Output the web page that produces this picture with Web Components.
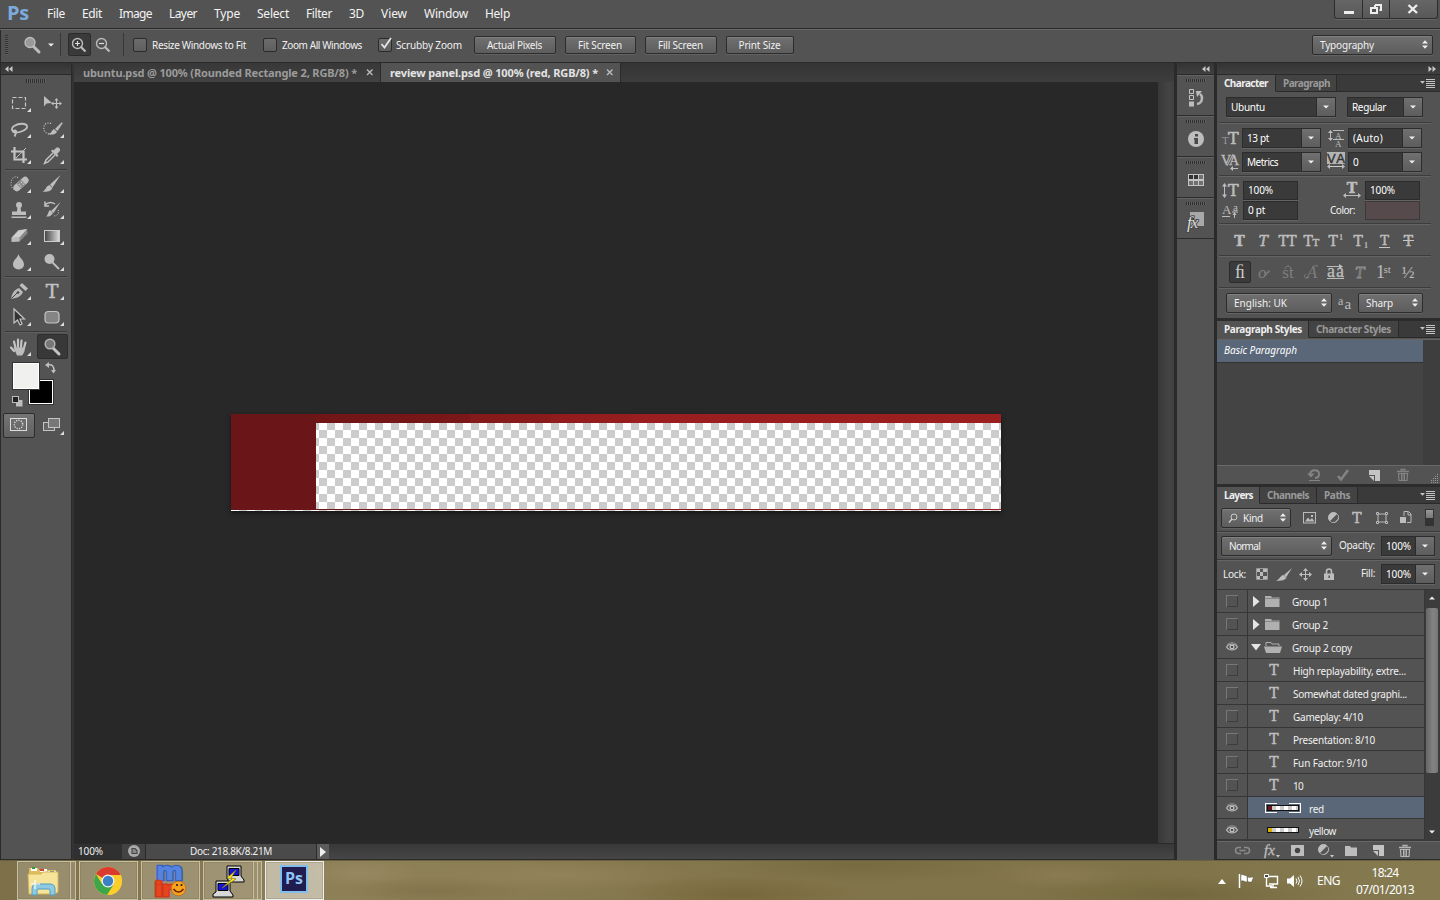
<!DOCTYPE html>
<html lang="en">
<head>
<meta charset="utf-8">
<title>Photoshop workspace</title>
<style>
html,body{margin:0;padding:0;background:#282828;overflow:hidden}
</style>
</head>
<body>
<ps-app></ps-app>
<script>
const BASE = `*{box-sizing:border-box}:host{display:block;box-sizing:border-box}`;
const labels = [];
function define(name, css, html, setup) {
  customElements.define(name, class extends HTMLElement {
    constructor() { super(); this.attachShadow({mode:'open'}); }
    connectedCallback() {
      if (this.ready) return;
      this.ready = true;
      const body = typeof html === 'function' ? html(this) : html;
      this.shadowRoot.innerHTML = `<style>${BASE}${css}</style>${body}`;
      if (setup) setup(this);
    }
  });
}
const S = (x, y, size, t, extra='') => `<text x="${x}" y="${y}" font-family="Liberation Serif,serif" font-size="${size}" ${extra}>${t}</text>`;
const D = (x, y, size, t, extra='') => `<text x="${x}" y="${y}" font-family="DejaVu Serif,serif" font-size="${size}" ${/stroke=/.test(extra)?'':'stroke="#bdbdbd" stroke-width=".5"'} ${extra}>${t}</text>`;
const corner = `<path d="M28 17v4h-4z" fill="#ddd"/>`;
/* name: [width, height, markup]; the default fill is light grey */
const ICONS = {
  lens:[18,18,`<path d="M10 10l6 6" stroke="#bdbdbd" stroke-width="3" stroke-linecap="round"/><circle cx="7" cy="6.5" r="5" fill="#999" stroke="#bdbdbd" stroke-width="1.3"/>`],
  lensIn:[16,16,`<path d="M9.5 9.5l5 5" stroke="#bbb" stroke-width="2.2"/><circle cx="6.5" cy="6.5" r="5" fill="none" stroke="#bbb" stroke-width="1.4"/><path d="M4 6.500h5M6.500 4v5" stroke="#ddd" stroke-width="1.200"/>`],
  lensOut:[16,16,`<path d="M9.500 9.500l5 5" stroke="#bbb" stroke-width="2.200"/><circle cx="6.500" cy="6.500" r="5" fill="none" stroke="#bbb" stroke-width="1.400"/><path d="M4 6.500h5" stroke="#ddd" stroke-width="1.200"/>`],
  caret:[6,4,`<path d="M0 .500h6L3 3.500z" fill="#eee"/>`],
  updown:[6,9,`<path d="M0 3.500h6L3 .300zM0 5.500h6L3 8.700z" fill="#eee"/>`],
  left2:[8,6,`<path d="M3.500 0v6L0 3zM7.500 0v6L4 3z" fill="#c8c8c8"/>`],
  right2:[8,6,`<path d="M.500 0v6L4 3zM4.500 0v6L8 3z" fill="#c8c8c8"/>`],
  close:[8,7,`<path d="M1 .500l5.500 5.500M6.500 .500L1 6" stroke="#bbb" stroke-width="1.400"/>`],
  min:[10,12,`<path d="M0 8h10v3H0z" fill="#eee"/>`],
  restore:[12,10,`<path d="M5 1h6v5H9.500M5 3V1" fill="none" stroke="#eee" stroke-width="2"/><rect x="1" y="4" width="6" height="5" fill="#535353" stroke="#eee" stroke-width="2"/>`],
  winx:[12,10,`<path d="M1.500 1l8.500 8M10 1L1.500 9" stroke="#eee" stroke-width="2.400"/>`],
  menu:[15,9,`<path d="M0 2h5L2.500 4.800zM6 0h9v1H6zM6 2h9v1H6zM6 4h9v1H6zM6 6h9v1H6zM6 8h9v1H6z" fill="#c4c4c4"/>`],
  /* toolbox */
  marquee:[32,24,`<rect x="9.500" y="6.500" width="13" height="11" fill="none" stroke="#c8c8c8" stroke-dasharray="4 2" stroke-width="1.200"/>`+corner],
  move:[32,24,`<path d="M8 5l0 10.500 2.500-3 5.500-.500z"/><path d="M20.500 8v9M16 12.500h9" stroke="#c4c4c4" stroke-width="1.200"/><path d="M20.500 7l2 2.500h-4zM20.500 18l2-2.500h-4zM15 12.500l2.500-2v4zM26 12.500l-2.500-2v4z"/>`],
  lasso:[32,24,`<path d="M12 16c-4-2-4-5-1-7 5-3 12-3 13 0s-6 7-12 6.500c-2 0-2-2 0-2s1 3-.500 6" fill="none" stroke="#c0c0c0" stroke-width="1.800"/>`+corner],
  quick:[32,24,`<path d="M15 6.500c-5-2-8 2-7 6.500 1 3 4 4 7 4" fill="none" stroke="#ccc" stroke-dasharray="1 1.500" stroke-width="1.300"/><path d="M26 5l-7 7 2.500 2 5-7.500z"/><path d="M18 12l3 3c-2 3-6 3-9 2 3 0 4-4 6-5z"/>`+corner],
  crop:[32,24,`<path d="M11.500 4v12.500H24M8 8.500h12.500V20" fill="none" stroke="#c4c4c4" stroke-width="2.200"/><path d="M23 5L13 15" stroke="#c4c4c4"/>`+corner],
  dropper:[32,24,`<path d="M17 10l-7 7-1.500 3.500L12 19l7-7" fill="none" stroke="#c4c4c4" stroke-width="1.400"/><path d="M15 8l6 6 1.500-1.500-1.500-1.500 2.500-2.500c2-3-1.500-5-3.500-3.500l-2.500 2.500-1-1z"/>`+corner],
  heal:[32,24,`<path d="M15 5.500C10 3 8 8 8 12c0 3 2 6 5 6" fill="none" stroke="#ccc" stroke-dasharray="1 1.500"/><g transform="rotate(-42 18 12)"><rect x="9" y="8.500" width="18" height="7" rx="3.500"/><rect x="15" y="8.500" width="6" height="7" fill="#8a8a8a"/><path d="M16 11h1M19 11h1M16 13.500h1M19 13.500h1" stroke="#eee"/></g>`+corner],
  brush:[32,24,`<path d="M24.500 3L14 12.500l2.500 3z" /><path d="M13.500 13l3 3c-2 4-6 4-10 3.500 3-1 4-6 7-6.500z"/>`+corner],
  stamp:[32,24,`<circle cx="16" cy="7" r="3"/><path d="M14.500 8h3l.500 5.500H23v3.500H9v-3.500h5zM8.500 18.500h15v1.500h-15z"/>`+corner],
  history:[32,24,`<path d="M24.500 4l-9.500 9 2.500 2z"/><path d="M14 12l3 3c-2 3-4 4-7 3.500 2-1 2-5 4-6.500z"/><path d="M9 7c3-3 7-3 10-1M9 3.500V8h4" fill="none" stroke="#c4c4c4" stroke-width="1.500"/><path d="M22 12c2 3-1 6-4 6" fill="none" stroke="#ccc" stroke-dasharray="1 1.500"/>`+corner],
  eraser:[32,24,`<path d="M15 6l9-1 .500 4.500-8 8L9 17.500l-.500-4z" fill="#888"/><path d="M15.500 6.500l8.500-1.500-7.500 8.500-8 .500z" fill="#d0d0d0"/><path d="M16.500 13.500v4l-8 .500v-4z" fill="#bbb"/>`+corner],
  gradient:[32,24,`<defs><linearGradient id="g"><stop stop-color="#444"/><stop offset="1" stop-color="#ddd"/></linearGradient></defs><rect x="8.500" y="6.500" width="15" height="11" fill="url(#g)" stroke="#ccc"/>`+corner],
  drop:[32,24,`<path d="M15.500 4c1 4 5.500 6 5.500 10.500a5.500 5 0 01-11 0C10 10 14.500 8 15.500 4z"/>`+corner],
  dodge:[32,24,`<circle cx="13.500" cy="9" r="5"/><path d="M16 12l7 7" stroke="#bdbdbd" stroke-width="2"/>`+corner],
  pen:[32,24,`<path d="M8 20c1-6 3-9 8-11l4 4c-2 4-5 6-12 7z" fill="#b8b8b8"/><path d="M8.500 19.500l6-6" stroke="#444"/><circle cx="15" cy="13.500" r="1.300" fill="#444"/><path d="M19 4l6 5.500-2.500 2.500-6-5.500z"/>`+corner],
  type:[32,24,D(16,19,19,'T','text-anchor="middle" fill="#c8c8c8"')+corner],
  arrow:[32,24,`<path d="M11 4v14l3.500-3 2.500 5 2-1-2-5h4.500z" fill="#333" stroke="#c4c4c4" stroke-width="1.200"/>`+corner],
  shape:[32,24,`<rect x="9" y="6.500" width="14" height="11.500" rx="3.500" fill="#858585" stroke="#c4c4c4" stroke-width="1.200"/>`+corner],
  hand:[32,24,`<path d="M12.500 13L11 6.500M15 12V4.500M18 12l.500-6.500M21 13l1.500-5.500M11 16l-3-3.500" stroke="#c4c4c4" stroke-width="2.200" stroke-linecap="round"/><path d="M10.500 12.500H22c0 4-1.500 6-3 8h-5z"/>`+corner],
  zoom:[32,24,`<path d="M17 13l6 6" stroke="#c4c4c4" stroke-width="3" stroke-linecap="round"/><circle cx="14" cy="9" r="4.800" fill="#777" stroke="#b4b4b4" stroke-width="1.500"/>`],
  swap:[11,12,`<path d="M3 3c4-1 6 1 6 6" fill="none" stroke="#c4c4c4" stroke-width="1.500"/><path d="M4 0v6L0 3zM6 8h5l-2.500 3.500z"/>`],
  defcol:[11,11,`<rect x="4" y="4" width="6.500" height="6.500"/><rect x=".500" y=".500" width="6" height="6" fill="#222" stroke="#bbb"/>`],
  mask:[18,15,`<rect x=".500" y=".500" width="16" height="12" fill="none" stroke="#ddd"/><circle cx="8.500" cy="6.500" r="4.200" fill="none" stroke="#ddd" stroke-dasharray="1.200 1.200" stroke-width="1.400"/>`],
  screen:[22,18,`<rect x=".500" y="5.500" width="11" height="8" fill="#666" stroke="#c4c4c4"/><rect x="5.500" y="1.500" width="11" height="9" fill="#777" stroke="#c4c4c4"/><path d="M21 14v4h-4z" fill="#ddd"/>`],
  /* collapsed panel rail */
  railHist:[16,18,`<path d="M1.500.500h4v4h-4zM1.500 6.500h4v4h-4z" fill="none" stroke="#c4c4c4"/><rect x="1" y="12.500" width="5" height="5"/><path d="M9 15c6-1 6-8 3-10" fill="none" stroke="#b8b8b8" stroke-width="2.500"/><path d="M8 2h6l-5 6z"/>`],
  railInfo:[16,16,`<circle cx="8" cy="8" r="8" fill="#bdbdbd"/><path d="M7 3h3v2.500H7zM6 7h4v6H6.500V8.500H6z" fill="#484848"/>`],
  railGrid:[16,12,`<rect width="16" height="12" fill="#c4c4c4"/><path d="M1 1h4v4H1zM6 1h4v4H6z" fill="#333"/><path d="M11 1h4v4h-4zM1 7h4v4H1zM6 7h4v4H6zM11 7h4v4h-4z" fill="#707070"/>`],
  railFx:[18,19,`<path d="M4 0h14v14H4z" fill="#a8a8a8"/>`+S(1,16,17,'fx','font-style="italic" fill="#ddd" stroke="#484848" stroke-width="2" paint-order="stroke" letter-spacing="-1"')],
  /* character panel */
  cSize:[17,15,D(6,13,16,'T')+D(0,13,10,'T','fill="#999" stroke="none"')],
  cLead:[17,17,S(7,8.500,9,'A')+S(7,17,9,'A')+`<path d="M5 .500h11M5 9.500h11M2.500 1v9" stroke="#bbb"/><path d="M0 3l2.500-3L5 3zM0 8l2.500 3L5 8z"/>`],
  cKern:[18,16,S(0,11,14,'VA','textLength="18" stroke="#bdbdbd" stroke-width=".3"')+`<path d="M12 0L6 12M10 14.500h7" stroke="#bbb"/><path d="M12 12v5l-3-2.500z"/>`],
  cTrack:[18,17,`<path d="M0 0h18v12H0z" fill="#b4b4b4"/><text x="0" y="10.500" font-family="Liberation Sans,sans-serif" font-size="13" fill="#333" stroke="#333" stroke-width=".4" textLength="18">VA</text><path d="M1 14.500h16" stroke="#ccc"/><path d="M3 12v5l-3-2.500zM15 12v5l3-2.500z"/>`],
  cVS:[17,15,D(6,13,16,'T')+`<path d="M2.500 1v12" stroke="#bbb"/><path d="M0 3.500L2.500 0 5 3.500zM0 11.500L2.500 15 5 11.500z"/>`],
  cHS:[18,16,D(9,10.500,14,'T','text-anchor="middle" font-weight="bold"')+`<path d="M1 13.500h16" stroke="#bbb"/><path d="M3 11v5l-3-2.500zM15 11v5l3-2.500z"/>`],
  cBase:[17,15,S(0,11,13,'A')+S(11,8,11,'a')+`<path d="M0 13.500h8M10 9h6M12.500 11v4" stroke="#bbb"/><path d="M10.500 12l2-3 2 3z"/>`],
  tB:[20,18,D(10.500,15,14,'T','text-anchor="middle" font-weight="bold"')],
  tI:[20,18,D(10.500,15,14,'T','text-anchor="middle" font-style="italic"')],
  tTT:[20,18,D(1.500,15,14,'TT','textLength="18"')],
  tTt:[20,18,D(2.500,15,14,'T')+D(11.500,15,10,'T')],
  tSup:[20,18,D(3.500,15,14,'T')+S(14,9,8,'1','font-weight="bold"')],
  tSub:[20,18,D(3.500,15,14,'T')+S(14,17,8,'1','font-weight="bold"')],
  tU:[20,18,D(10.500,13.500,13,'T','text-anchor="middle"')+`<path d="M5 16.500h11" stroke="#c4c4c4"/>`],
  tS:[20,18,D(10.500,15,14,'T','text-anchor="middle"')+`<path d="M5 9.500h11" stroke="#c4c4c4"/>`],
  oFi:[20,18,S(10,15,18,'ﬁ','text-anchor="middle" fill="#ccc"')],
  oO:[20,18,S(5,15,17,'o','font-style="italic" fill="#7f7f7f"')+`<path d="M11 9c3 2 5 0 4-2M12 13c2-2 3-3 5-5" fill="none" stroke="#7f7f7f"/>`],
  oSt:[20,18,S(11,15,17,'st','text-anchor="middle" fill="#7f7f7f"')+`<path d="M8 6c1-4 5-4 6 0" fill="none" stroke="#7f7f7f"/>`],
  oA:[20,18,S(11,15,17,'A','text-anchor="middle" font-style="italic" fill="#7f7f7f"')+`<path d="M8 14c-4 3-6-1-3-3M11 4c3-2 5-1 6-1" fill="none" stroke="#7f7f7f"/>`],
  oaa:[20,18,S(2,14,18,'aa','textLength="17" stroke="#bdbdbd" stroke-width=".3"')+`<path d="M2 3.500h13M2 15.500h17" stroke="#bbb"/><path d="M14 1v5l4-2.500z"/>`],
  oT:[20,18,D(10,15,14,'T','text-anchor="middle" font-style="italic" fill="none" stroke="#8d8d8d" stroke-width=".8"')],
  o1:[20,18,S(2,15,18,'1')+S(9.500,10,11,'st')],
  oHalf:[20,18,S(10,15,17,'½','text-anchor="middle"')],
  aa:[15,14,S(0,9,12,'a')+S(6.500,12.500,15,'a')],
  undo:[14,12,`<path d="M3 5c1-5 9-5 9 0 0 3-2 4-4 4" fill="none" stroke="#838383" stroke-width="2"/><path d="M0 4.500h7.500L4 8.500z" fill="#838383"/><path d="M2 11.500h11" stroke="#838383"/>`],
  check:[12,12,`<path d="M1 7l3 3.500L11 1" fill="none" stroke="#838383" stroke-width="2.600"/>`],
  newdoc:[11,11,`<path d="M0 0h11v11H6V5H0z" fill="#c4c4c4"/><path d="M0 6h5v5z" fill="#c4c4c4"/>`],
  trash:[12,12,`<path d="M4 1.500V.500h4v1M0 2.500h12" fill="none" stroke="var(--ic,#b4b4b4)" stroke-width="1.300"/><path d="M1.500 4.500h9l-.500 7h-8z" fill="none" stroke="var(--ic,#b4b4b4)" stroke-width="1.200"/><path d="M4.500 5v6M6 5v6M7.500 5v6" stroke="var(--ic,#b4b4b4)"/>`],
  grip:[9,9,`<path d="M8.500 0v9M6.500 2v7M4.500 4v5M2.500 6v3" stroke="#999" stroke-dasharray="1 1"/>`],
  /* layers */
  kindlens:[10,10,`<circle cx="6" cy="4" r="3" fill="none" stroke="#ccc"/><path d="M4 6L1 9.500" stroke="#ccc" stroke-width="1.400"/>`],
  fImg:[13,12,`<rect x=".500" y=".500" width="12" height="10.500" fill="none" stroke="#bbb"/><path d="M2 9.500l3-4 2 2.500 2-2 2.500 3.500zM8 3h2v2H8z"/>`],
  fAdj:[11,11,`<circle cx="5.500" cy="5.500" r="5" fill="#bdbdbd" stroke="#bdbdbd"/><path d="M2 9a5 5 0 007-7z" fill="#555"/>`],
  fT:[12,13,D(6,11.500,14,'T','text-anchor="middle"')],
  fShape:[12,12,`<path d="M2 2h8v8H2z" fill="none" stroke="#bbb"/><path d="M.500 .500h2v2h-2zM9.500 .500h2v2h-2zM.500 9.500h2v2h-2zM9.500 9.500h2v2h-2z" fill="#535353" stroke="#bbb"/>`],
  fSmart:[12,13,`<path d="M4 5V.500h4.500L11 3v8.500H7M8 1v3h3" fill="none" stroke="#bbb"/><rect y="6" width="6" height="6"/>`],
  lChk:[12,12,`<path d="M.500.500h11v11H.500z" fill="#555" stroke="#999"/><path d="M1 1h3v3H1zM7 1h4v3H7zM4 4h3v4H4zM1 8h3v3H1zM7 8h4v3H7z" fill="#bbb"/>`],
  lBrush:[17,13,`<path d="M16 0L8 7l2 2.500z"/><path d="M7.500 7l3 3c-3 3-7 3-10.500 2.500 4-1 4-5 7.500-5.500z"/>`],
  lMove:[13,13,`<path d="M6.500 2v9M2 6.500h9" stroke="#bbb"/><path d="M6.500 0L9 3H4zM6.500 13L4 10h5zM0 6.500L3 4v5zM13 6.500L10 9V4z"/>`],
  lLock:[10,12,`<path d="M2.500 6V3.500a2.500 2.500 0 015 0V6" fill="none" stroke="#bbb" stroke-width="1.600"/><rect y="5.500" width="10" height="6.500"/><path d="M4.500 7.500h1.300V10H4.500z" fill="#444"/>`],
  eye:[12,10,`<path d="M.500 5C3 1 9 1 11.500 5 9 9 3 9 .500 5z" fill="none" stroke="#b4b4b4" stroke-width="1.200"/><circle cx="6" cy="5" r="2.500"/><circle cx="6" cy="5" r="1.100" fill="#333"/><path d="M1 2.500C4 0 8 0 11 2.500" fill="none" stroke="#888"/>`],
  box:[12,12,`<rect x=".500" y=".500" width="11" height="11" fill="none" stroke="#3d3d3d"/><path d="M0 .500h12M.500 0v12" stroke="#777" fill="none"/>`],
  tri:[7,11,`<path d="M0 0v11l6.500-5.500z" fill="#e4e4e4"/>`],
  trid:[10,7,`<path d="M0 0h10L5 6.500z" fill="#e4e4e4"/>`],
  folder:[15,11,`<path d="M0 0h6l1 1.500h7.500V11H0z" fill="#b0b0b0"/><path d="M0 2.500h14" stroke="#888"/>`],
  folderO:[18,11,`<path d="M2 4V.500h5l1 1.500h7V4" fill="none" stroke="#b0b0b0"/><path d="M0 4.500h18L16 11H2z" fill="#b0b0b0"/>`],
  lT:[12,12,D(6,11.500,14,'T','text-anchor="middle"')],
  link:[15,9,`<path d="M6 1.500H3.500a3 3 0 000 6H6M9 1.500h2.500a3 3 0 010 6H9M4.500 4.500h6" fill="none" stroke="#8b8b8b" stroke-width="1.500"/>`],
  fx:[17,15,S(1,12,15,'fx','font-style="italic" stroke="#bdbdbd" stroke-width=".3"')+`<path d="M13 12h4l-2 2.500z" fill="#ccc"/>`],
  addmask:[13,11,`<path d="M0 0h13v11H0z"/><circle cx="6.500" cy="5.500" r="2.700" fill="#444"/>`],
  adj:[16,13,`<circle cx="5.500" cy="5.500" r="5" fill="#bdbdbd" stroke="#bdbdbd"/><path d="M2 9a5 5 0 007-7z" fill="#555"/><path d="M12 11h4l-2 2.500z" fill="#ccc"/>`],
  sfolder:[12,10,`<path d="M0 0h5l1 1.500h6V10H0z"/>`],
  stat:[12,12,`<circle cx="6" cy="6" r="6" fill="#aaa"/><path d="M4 8.500v-5h3l2 2v3z" fill="#888" stroke="#444" stroke-width="1.100"/>`],
  play:[7,10,`<path d="M0 0v10l6-5z" fill="#eee"/>`],
  /* taskbar */
  explorer:[34,32,`<path d="M3 7V3h9l1 2h17v6H3z" fill="#e0bd5c"/><path d="M5 3h6v3H5zM14 4h7v3h-7zM22 6h8v3h-8z" fill="#fff"/><path d="M6 2h3v2H6z" fill="#2b9d48"/><path d="M14 4h4v2h-4z" fill="#d3422c"/><path d="M24 6h4v2h-4z" fill="#3789c9"/><path d="M2 9h13l2-2h15v20l-3 2H3z" fill="#f7e49b" stroke="#d6b659"/><path d="M6 30v-6q0-5 5-5h13q5 0 5 5v6h-5v-5q0-1-2-1h-9q-2 0-2 1v5z" fill="#8ecbe3" stroke="#4f9dc4"/><path d="M9 15v9M5 19h9" stroke="#fff" stroke-width="1.200"/>`],
  chrome:[30,30,`<circle cx="15" cy="15" r="14" fill="#fbce2b"/><path d="M15 15L2.900 8A14 14 0 0115 1a14 14 0 0112.600 8H15z" fill="#db3a2e"/><path d="M2.900 8a14 14 0 0012 21l6-10L15 15 9 18z" fill="#3da54a"/><path d="M27.600 9A14 14 0 0114 29l7-11a7 7 0 00-2-9z" fill="#fbce2b"/><circle cx="15" cy="15" r="6.500" fill="#f3f3f3"/><circle cx="15" cy="15" r="5.200" fill="#3d80c5"/>`],
  mirc:[34,34,`<text x="3" y="15.500" font-family="Open Sans,sans-serif" font-weight="800" font-size="24" textLength="27" lengthAdjust="spacingAndGlyphs" fill="#5583dd" stroke="#3560bd" stroke-width="2.500" paint-order="stroke">m</text><text x="2" y="32" font-family="Open Sans,sans-serif" font-weight="800" font-size="19" textLength="18" lengthAdjust="spacingAndGlyphs" fill="#e8451f" stroke="#d0391a" stroke-width="3" paint-order="stroke">ir</text><circle cx="25.500" cy="24.500" r="7.300" fill="#f6a21e" stroke="#b35a10" stroke-width=".600"/><circle cx="24" cy="21" r="1.100" fill="#222"/><circle cx="28.500" cy="21" r="1.100" fill="#222"/><path d="M20.500 25c3 4 7 4 10 0" fill="none" stroke="#6b2200" stroke-width="1.500"/>`],
  putty:[34,34,`<g stroke="#000" fill="#d8d8d8"><path d="M15 2h14v10l3 4v2H16v-3h-1z"/><path d="M4 17h14v10l3 4v2H1v-3l3-2z"/></g><path d="M17 4.500h10v7H17zM6 19.500h10v7H6z" fill="#1414d2" stroke="#000"/><path d="M24 6l-9 8 5 1-10 9 14-9-5-1z" fill="#ffec1c" stroke="#887a00" stroke-width=".700"/>`],
  psapp:[28,28,`<rect x="1" y="1" width="26" height="26" fill="#201c50" stroke="#80bcec" stroke-width="2"/><text x="14" y="19" text-anchor="middle" font-family="Open Sans,Noto Sans,sans-serif" font-size="16" font-weight="700" fill="#8fc4f4">Ps</text>`],
  up:[8,5,`<path d="M0 5h8L4 0z" fill="#fff"/>`],
  flag:[16,16,`<path d="M1.500 1v14" stroke="#fff" stroke-width="1.500"/><path d="M3 2c3-1 4 1 6 1v6c-2 0-3-2-6-1zM9.500 4c2 1 4 0 6 0l-2 5c-2 0-3 0-4-1z" fill="#fff" stroke="#333" stroke-width=".300"/>`],
  net:[16,16,`<path d="M6 3.500h8.500v7.500H6M3.500 5v8H9M10 11v3M7 14.500h7" fill="none" stroke="#fff" stroke-width="1.400"/><path d="M1.500 1.500h4v3h-4z" fill="#444" stroke="#fff"/>`],
  speaker:[16,14,`<path d="M0 4.500h3L7 1v12L3 9.500H0z" fill="#fff"/><path d="M9 4.500q2 2.500 0 5M11 3q3 4 0 8M13 1.500q4 5.500 0 11" fill="none" stroke="#fff"/>`],
};
define('ps-icon', `:host{display:block;flex:none}svg{display:block;overflow:visible}`, el => {
  const [w,h,m] = ICONS[el.getAttribute('name')];
  return `<svg width="${w}" height="${h}" viewBox="0 0 ${w} ${h}" fill="#bdbdbd">${m}</svg>`;
});
/* A single-line label which spaces its letters to fill the width given in w. */
define('ps-t', `:host{display:block;flex:none;white-space:nowrap}span{display:inline-block}`, `<span><slot></slot></span>`, el => {
  el.style.width = el.getAttribute('w') + 'px';
  labels.push(el);
});
const I = (n, ml=0, extra='') => `<ps-icon name="${n}" style="margin-left:${ml}px;${extra}"></ps-icon>`;
const T = (w, t, ml=0, extra='') => `<ps-t w="${w}" style="margin-left:${ml}px;${extra}">${t}</ps-t>`;
const BTN = `background:linear-gradient(#707070,#5d5d5d);border:1px solid #2c2c2c;border-radius:2px;box-shadow:inset 0 1px #808080,0 1px #626262`;

define('ps-button', `:host{display:flex;justify-content:center;align-items:center;height:18px;flex:none;padding-right:1px;${BTN}}`, `<slot></slot>`);
define('ps-select', `:host{display:flex;align-items:center;height:20px;padding:0 4px 0 7px;flex:none;${BTN}}ps-icon{margin-left:auto}`, `<slot></slot><ps-icon name="updown"></ps-icon>`);
define('ps-field', `:host{display:flex;height:20px;flex:none;background:#3a3a3a;border:1px solid #2c2c2c;box-shadow:0 1px #646464;color:#fff}
.v{flex:1;display:flex;align-items:center;padding-left:4px}
.b{width:19px;display:flex;align-items:center;justify-content:center;background:linear-gradient(#707070,#5d5d5d);border-left:1px solid #2c2c2c}`,
  el => `<div class="v"><slot></slot></div>${el.hasAttribute('plain')?'':'<div class="b"><ps-icon name="caret"></ps-icon></div>'}`);
define('ps-check', `:host{width:14px;height:14px;flex:none;background:linear-gradient(#6c6c6c,#5e5e5e);border:1px solid #2b2b2b;border-radius:2px}svg{display:block;overflow:visible}`,
  el => el.hasAttribute('on') ? `<svg width="12" height="12"><path d="M2.500 5l3 3.500L12-1" fill="none" stroke="#e6e6e6" stroke-width="1.800"/></svg>` : '');
define('ps-line', `:host{height:2px;margin:0 9px 0 2px;background:#3c3c3c;border-bottom:1px solid #646464}`, '');

define('menu-bar', `:host{height:30px;display:flex;align-items:center;background:#535353;border-bottom:1px solid #696969;box-shadow:inset 0 -1px #2a2a2a;font-size:12px;color:#f4f4f4;padding-bottom:1px}
.logo{margin-left:7px;width:40px;color:#7caadb;font:bold 20px/26px "Open Sans",sans-serif;align-self:flex-start}
nav{display:flex;gap:17px;flex:1}
.win{align-self:flex-start;display:flex;width:104px;height:19px;margin-right:2px;border:1px solid #2d2d2d;border-top:0;border-radius:0 0 3px 3px;background:linear-gradient(#666,#585858);box-shadow:0 1px #666}
.win div{display:flex;justify-content:center;align-items:center;border-right:1px solid #2d2d2d}.win div:last-child{border:0}`,
`<div class="logo"><ps-t w="22">Ps</ps-t></div><nav>${[['File',18],['Edit',20],['Image',33],['Layer',28],['Type',26],['Select',32],['Filter',26],['3D',15],['View',26],['Window',44],['Help',25]].map(a=>T(a[1],a[0])).join('')}</nav>
<div class="win"><div style="width:28px">${I('min')}</div><div style="width:27px">${I('restore')}</div><div style="flex:1">${I('winx',-2)}</div></div>`);

define('options-bar', `:host{height:33px;display:flex;align-items:center;background:#535353;border-bottom:1px solid #2a2a2a;border-left:1px solid #2a2a2a;padding-bottom:3px}
.grip{width:3px;height:20px;margin-left:4px;background:repeating-linear-gradient(#333 0 1px,#5c5c5c 1px 2px)}
.sep{width:1px;height:23px;background:#383838}
.on{width:23px;height:23px;display:flex;align-items:center;justify-content:center;background:#3a3a3a;border:1px solid #2b2b2b;border-radius:2px}`,
`<div class="grip"></div>${I('lens',15)}${I('caret',7)}<div class="sep" style="margin-left:6px"></div><div class="on" style="margin-left:7px">${I('lensIn',-1)}</div>${I('lensOut',4)}<div class="sep" style="margin-left:12px"></div>
<ps-check style="margin-left:9px"></ps-check>${T(94,'Resize Windows to Fit',5)}<ps-check style="margin-left:17px"></ps-check>${T(80,'Zoom All Windows',5)}<ps-check on style="margin-left:16px"></ps-check>${T(66,'Scrubby Zoom',4)}
<ps-button style="width:82px;margin-left:12px">${T(55,'Actual Pixels')}</ps-button><ps-button style="width:71px;margin-left:9px">${T(44,'Fit Screen')}</ps-button><ps-button style="width:72px;margin-left:9px">${T(45,'Fill Screen')}</ps-button><ps-button style="width:68px;margin-left:9px">${T(42,'Print Size')}</ps-button>
<ps-select style="width:121px;margin-left:auto;margin-right:7px">${T(54,'Typography')}</ps-select>`);

define('tool-box', `:host{width:72px;background:#535353;border:1px solid #2a2a2a;border-top:0;display:flex;flex-direction:column}
.head{height:12px;background:linear-gradient(#343434,#404040);border-bottom:1px solid #2a2a2a;display:flex;align-items:center;padding-left:4px;flex:none}
.grip{width:20px;height:4px;margin:4px 0 0 25px;background:repeating-linear-gradient(90deg,#2e2e2e 0 1px,#606060 1px 2px);flex:none}
.g{display:grid;grid-template-columns:33px 33px;padding-left:1px;justify-items:center}
.g>*{padding:1px 0}.g>.z{padding:0;background:#383838;border:1px solid #2d2d2d;border-radius:2px;width:31px;height:25px;margin:0 0 0 1px}
.l{height:2px;margin:1px 4px 0;background:#3a3a3a;border-bottom:1px solid #5e5e5e}
.c{position:relative;height:45px;margin-top:3px}.c>*{position:absolute}
.bg{left:28px;top:17px;width:24px;height:24px;background:#000;border:1px solid #fff;outline:1px solid #333}
.fg{left:12px;top:0;width:26px;height:26px;background:#f0f0ef;border:1px solid #fff;outline:1px solid #333}
.b{display:flex;align-items:center;margin-top:5px}.m{width:32px;height:25px;margin-left:2px;display:flex;align-items:center;justify-content:center;background:linear-gradient(#757575,#606060);border:1px solid #2c2c2c;border-radius:2px}`,
() => { const g = (...a) => `<div class="g">${a.map(n=>I(n)).join('')}</div>`;
return `<div class="head">${I('left2')}</div><div class="grip"></div><div style="height:7px"></div>
${g('marquee','move','lasso','quick','crop','dropper')}<div class="l"></div>${g('heal','brush','stamp','history','eraser','gradient','drop','dodge')}<div class="l"></div>${g('pen','type','arrow','shape')}<div class="l"></div><div class="g" style="margin-top:1px">${I('hand')}<div class="z">${I('zoom',-2)}</div></div>
<div class="c"><div class="bg"></div><div class="fg"></div>${I('swap',0,'left:44px;top:-1px')}${I('defcol',0,'left:11px;top:33px')}</div>
<div class="b"><div class="m">${I('mask')}</div>${I('screen',8)}</div>`; });

define('art-board', `:host{width:770px;height:97px;background:conic-gradient(#ccc 25%,#fff 0 50%,#ccc 0 75%,#fff 0) 0 0/16px 16px;box-shadow:0 2px 4px #151515;display:grid;grid-template:9px 86px 1px 1px/85px 1fr}
.l{grid-row:1/4;background:#6a1517}.t{background:linear-gradient(90deg,#701517 0,#7b1718 154px,#841a1b 155px,#8a1a1b 234px,#911c1d 235px,#951d1e 315px,#9a1e1f 316px,#9c1f20)}.u{grid-row:3;grid-column:2;background:linear-gradient(90deg,#701517,#9c1f20)}`,
`<div class="l"></div><div class="t"></div><div class="u"></div>`);

define('doc-area', `:host{flex:1;display:grid;grid-template:19px 761px 17px/1fr 16px;border-left:2px solid #333;background:#282828}
.tabs{grid-column:1/3;display:flex;background:linear-gradient(#343434,#3d3d3d);font-weight:bold;font-size:11px;border-bottom:0}
.tab{display:flex;align-items:center;border-right:1px solid #2a2a2a;background:linear-gradient(#383838,#424242);color:#9b9b9b;padding-left:9px}.tab.on{background:#535353;color:#e4e4e4}
.cv{padding:332px 0 0 157px;background:#282828}
.vs{background:linear-gradient(90deg,#383838,#444 70%,#404040)}
.st{grid-column:1/3;display:flex;align-items:center;background:linear-gradient(#383838,#464646);border-top:1px solid #2a2a2a;border-bottom:1px solid #2a2a2a}
.st>*{height:100%;display:flex;align-items:center;padding-bottom:1px}`,
`<div class="tabs"><div class="tab" style="width:307px">${T(274,'ubuntu.psd @ 100% (Rounded Rectangle 2, RGB/8) *')}${I('close',9)}</div><div class="tab on" style="width:240px">${T(208,'review panel.psd @ 100% (red, RGB/8) *')}${I('close',8)}</div></div>
<div class="cv"><art-board></art-board></div><div class="vs"></div>
<div class="st"><div style="width:48px;background:#303030;padding-left:4px">${T(25,'100%')}</div><div style="width:24px;background:#434343;padding-left:6px;border-right:1px solid #2a2a2a">${I('stat')}</div><div style="width:171px;background:#4a4a4a;padding-left:44px;border-right:1px solid #2a2a2a">${T(82,'Doc: 218.8K/8.21M')}</div><div style="width:12px;background:#5c5c5c;padding:1px 0 0 3px">${I('play')}</div></div>`);

define('icon-rail', `:host{width:37px;background:#535353}
.c{height:41px;border-bottom:1px solid #2c2c2c;border-top:1px solid #626262;display:flex;flex-direction:column;align-items:center}
.c::before{content:"";width:20px;height:3px;margin:3px 0 7px;background:repeating-linear-gradient(90deg,#2e2e2e 0 1px,#606060 1px 2px);flex:none}`,
['railHist','railInfo','railGrid','railFx'].map(n=>`<div class="c">${I(n,1,n=='railGrid'?'margin-top:3px':n=='railInfo'?'margin-top:1px':n=='railFx'?'margin-left:-1px':'')}</div>`).join(''));

define('ps-panel', `:host{display:flex;flex-direction:column;background:#535353;border-bottom:3px solid #2c2c2c}
.tabs{display:flex;height:17px;background:#3a3a3a;font-weight:bold;flex:none;align-items:stretch}
.tab{display:flex;align-items:center;padding-left:7px;border-right:1px solid #2a2a2a;border-bottom:1px solid #2a2a2a;background:#434343;color:#9a9a9a}.tab.on{background:#535353;color:#eee;border-bottom-color:#535353}
.r{flex:1;display:flex;align-items:center;justify-content:flex-end;padding-right:5px;border-bottom:1px solid #2a2a2a}`,
el => `<div class="tabs">${el.getAttribute('tabs').split('|').map((s,i)=>{const [n,w,t]=s.split(':');return `<div class="tab ${i?'':'on'}" style="width:${w}px">${T(t,n,0)}</div>`}).join('')}<div class="r">${I('menu')}</div></div><slot></slot>`);

define('char-panel', `.r{display:flex;align-items:center}.sw{width:55px;height:19px;background:#564a4d;border:1px solid #3c3838}
.g{display:grid;grid-template-columns:repeat(8,24.100px);padding-left:10px;align-items:center;justify-items:center}.fi{width:22px;height:22px;margin-left:1px;background:#3b3b3b;border:1px solid #2b2b2b;border-radius:2px;padding:1px 0}`,
`<div class="r" style="height:30px"><ps-field style="width:110px;margin-left:9px">${T(34,'Ubuntu')}</ps-field><ps-field style="width:76px;margin-left:11px">${T(34,'Regular')}</ps-field></div><ps-line></ps-line>
<div class="r" style="height:28px">${I('cSize',5)}<ps-field style="width:79px;margin-left:3px">${T(22,'13 pt')}</ps-field>${I('cLead',7)}<ps-field style="width:74px;margin-left:3px">${T(30,'(Auto)')}</ps-field></div>
<div class="r" style="height:24px;margin-bottom:-1px;align-items:flex-start;">${I('cKern',4,'margin-top:2px')}<ps-field style="width:79px;margin-left:3px">${T(31,'Metrics')}</ps-field>${I('cTrack',6)}<ps-field style="width:74px;margin-left:3px">${T(5,'0')}</ps-field></div><ps-line></ps-line>
<div class="r" style="height:24px;margin-top:1px">${I('cVS',5)}<ps-field plain style="width:55px;height:19px;margin-left:4px">${T(25,'100%')}</ps-field>${I('cHS',45)}<ps-field plain style="width:55px;height:19px;margin-left:4px">${T(25,'100%')}</ps-field></div>
<div class="r" style="height:20px;margin-top:-2px">${I('cBase',5)}<ps-field plain style="width:55px;height:19px;margin-left:4px">${T(17,'0 pt')}</ps-field>${T(25,'Color:',32)}<div class="sw" style="margin-left:10px"></div></div>
<div style="height:3px"></div><ps-line></ps-line><div class="g" style="height:30px">${['tB','tI','tTT','tTt','tSup','tSub','tU','tS'].map(n=>I(n)).join('')}</div><ps-line></ps-line>
<div class="g" style="height:30px"><div class="fi">${I('oFi')}</div>${['oO','oSt','oA','oaa','oT','o1','oHalf'].map(n=>I(n)).join('')}</div><ps-line></ps-line>
<div class="r" style="height:28px;padding-bottom:1px"><ps-select style="width:106px;margin-left:9px">${T(53,'English: UK')}</ps-select>${I('aa',6)}<ps-select style="width:65px;margin-left:5px">${T(27,'Sharp')}</ps-select></div>`);

define('styles-panel', `:host{flex:1;display:flex;flex-direction:column}.b{flex:1;display:flex;background:#3e3e3e;border-top:1px solid #646464;margin-top:1px}.l{width:206px;background:#444}.s{height:23px;background:#5a6779;border-bottom:1px solid #333;padding-left:7px;display:flex;align-items:center;padding-bottom:3px;font-style:italic;color:#fff}
.f{height:19px;background:#535353;border-top:1px solid #686868;display:flex;align-items:center;--ic:#838383}`,
`<div class="b"><div class="l"><div class="s">${T(73,'Basic Paragraph')}</div></div></div><div class="f">${I('undo',90)}${I('check',16)}${I('newdoc',20)}${I('trash',17)}${I('grip',20,'margin-top:7px')}</div>`);

define('layer-row', `:host{display:flex;height:23px;border-bottom:1px solid #363636;background:#535353}:host([on]){background:linear-gradient(90deg,#535353 30px,#5a6779 30px);height:22px}
.e{width:31px;border-right:1px solid #363636;display:flex;align-items:center;padding-left:9px}.x{display:flex;align-items:center;flex:1}
.th{width:32px;height:6px;border:1px solid #111;background:linear-gradient(90deg,var(--c) 4px,transparent 4px),repeating-linear-gradient(90deg,#fff 0 4px,#ccc 4px 8px)}
.fr{padding:2px;background:linear-gradient(#fff,#fff) 0 0/12px 1px,linear-gradient(#fff,#fff) 100% 0/12px 1px,linear-gradient(#fff,#fff) 0 100%/12px 1px,linear-gradient(#fff,#fff) 100% 100%/12px 1px,linear-gradient(#fff,#fff) 0 0/1px 100%,linear-gradient(#fff,#fff) 100% 0/1px 100%;background-repeat:no-repeat}`,
el => { const a=n=>el.getAttribute(n), k=a('k'), t=T(a('w'),a('n'),0,'padding-top:2px');
 let x = k=='g' ? I('tri',5)+I('folder',5)+`<div style="width:12px"></div>` : k=='o' ? I('trid',3)+I('folderO',3)+`<div style="width:10px"></div>` : k=='t' ? I('lT',20,'margin-top:-3px')+`<div style="width:13px"></div>` : k=='r' ? `<div class="fr" style="margin-left:17px"><div class="th" style="--c:#6a1517"></div></div><div style="width:8px"></div>` : `<div class="th" style="--c:#d4b000;margin-left:19px"></div><div style="width:10px"></div>`;
 return `<div class="e">${I(el.hasAttribute('eye')?'eye':'box')}</div><div class="x">${x}${t}</div>`; });

define('layers-panel', `:host{flex:1;display:flex;flex-direction:column;min-height:0}.r{display:flex;align-items:center;flex:none}.ln{height:2px;background:#3a3a3a;border-bottom:1px solid #646464;flex:none}
.tg{width:9px;height:17px;background:linear-gradient(#999,#777 8px,#333 8px);border:1px solid #333}
.list{display:flex;height:250px;overflow:hidden;border-top:1px solid #363636;flex:none}.rows{width:208px;border-right:1px solid #363636;flex:none}
.sb{flex:1;background:#3c3c3c;display:flex;flex-direction:column;align-items:center;padding-right:1px}.th{width:12px;height:165px;margin:8px 0 57px;border-radius:2px;background:linear-gradient(90deg,#666,#838383 60%,#777)}
.f{height:18px;border-top:1px solid #666;box-shadow:0 -2px #3a3a3a;display:flex;align-items:center;margin-top:2px}`,
`<div class="r" style="height:27px;padding-bottom:0"><ps-select style="width:70px;margin-left:4px;padding-left:6px">${I('kindlens')}${T(20,'Kind',5)}</ps-select>${I('fImg',12)}${I('fAdj',12)}${I('fT',12)}${I('fShape',13)}${I('fSmart',12)}<div class="tg" style="margin-left:13px"></div></div><div class="ln"></div>
<div class="r" style="height:26px;padding-bottom:1px"><ps-select style="width:111px;margin-left:4px">${T(31,'Normal')}</ps-select>${T(36,'Opacity:',7,'margin-top:-1px')}<ps-field style="width:54px;margin-left:6px">${T(25,'100%')}</ps-field></div><div class="ln"></div>
<div class="r" style="height:28px;padding-bottom:2px">${T(23,'Lock:',6)}${I('lChk',10)}${I('lBrush',8)}${I('lMove',6)}${I('lLock',12)}${T(14,'Fill:',27,'margin-top:-2px')}<ps-field style="width:54px;margin-left:6px">${T(25,'100%')}</ps-field></div>
<div class="list"><div class="rows"><layer-row k="g" n="Group 1" w="36"></layer-row><layer-row k="g" n="Group 2" w="36"></layer-row><layer-row k="o" eye n="Group 2 copy" w="60"></layer-row><layer-row k="t" n="High replayability, extre..." w="113"></layer-row><layer-row k="t" n="Somewhat dated graphi..." w="114"></layer-row><layer-row k="t" n="Gameplay: 4/10" w="70"></layer-row><layer-row k="t" n="Presentation: 8/10" w="82"></layer-row><layer-row k="t" n="Fun Factor: 9/10" w="74"></layer-row><layer-row k="t" n="10" w="10"></layer-row><layer-row k="r" on eye n="red" w="15"></layer-row><layer-row k="y" eye n="yellow" w="27"></layer-row></div>
<div class="sb">${I('caret',0,'transform:scaleY(-1);margin-top:6px')}<div class="th"></div>${I('caret')}</div></div>
<div class="f">${I('link',18)}${I('fx',13)}${I('addmask',11)}${I('adj',14)}${I('sfolder',11)}${I('newdoc',16)}${I('trash',15)}</div>`);

define('task-bar', `:host{height:40px;display:flex;align-items:flex-start;background:radial-gradient(70px 14px at 1060px 14px,#a0906c44,transparent),radial-gradient(60px 12px at 360px 12px,#9c8c6899,transparent),radial-gradient(120px 20px at 740px 34px,#6b5a3088,transparent),radial-gradient(150px 18px at 860px 4px,#70633a99,transparent),radial-gradient(100px 14px at 430px 30px,#7a6a4588,transparent),radial-gradient(140px 16px at 560px 14px,#9d8c6577,transparent),radial-gradient(160px 20px at 1180px 34px,#6b613699,transparent),linear-gradient(90deg,#7d7049,#8f8158 25%,#85774d 45%,#82744a 60%,#807349 80%,#857a50);border-top:1px solid #6b613f;padding-left:17px;font-size:12px;color:#fff}
.b{height:39px;border:1px solid #c9c0a2;background:#ffffff30;display:flex;align-items:center;justify-content:center;flex:none;box-shadow:inset 0 0 0 1px #6b604033}
.e{height:39px;border:1px solid #c9c0a2;border-left:0;background:#ffffff28;width:4px}
.tray{margin-left:auto;display:flex;align-items:center;height:40px}.clk{display:flex;flex-direction:column;align-items:center;line-height:17px}`,
`<div class="b" style="width:54px">${I('explorer',-2)}</div><div class="e" style="width:5px"></div><div class="b" style="width:59px;margin-left:3px">${I('chrome',-1)}</div><div class="b" style="width:59px;margin-left:3px">${I('mirc',-2)}</div><div class="b" style="width:51px;margin-left:3px">${I('putty')}</div><div class="e"></div><div class="e"></div><div class="b" style="width:59px;margin-left:3px;background:#ffffff78;border-color:#eee">${I('psapp',-2,'margin-top:-4px')}</div>
<div class="tray">${I('up')}${I('flag',12)}${I('net',9)}${I('speaker',8)}${T(23,'ENG',14)}<div class="clk" style="margin-left:16px;margin-right:26px">${T(27,'18:24')}${T(58,'07/01/2013')}</div></div>`);

define('ps-app', `:host{width:1440px;height:900px;display:flex;flex-direction:column;font:10px/14px "Noto Sans","Open Sans",sans-serif;color:#f0f0f0;background:#282828;overflow:hidden}
.main{height:797px;display:flex}.dock{width:266px;flex:none;border-left:3px solid #2a2a2a;display:grid;grid-template:12px 785px/37px 223px;column-gap:3px;background:#2a2a2a;border-top:0}
.h{background:linear-gradient(#343434,#404040);border-bottom:1px solid #2a2a2a;display:flex;align-items:center;justify-content:flex-end;padding-right:4px}`,
`<menu-bar></menu-bar><options-bar></options-bar><div class="main"><tool-box></tool-box><doc-area></doc-area>
<div class="dock"><div class="h">${I('left2')}</div><div class="h">${I('right2')}</div><icon-rail></icon-rail><div>
<ps-panel tabs="Character:59:44|Paragraph:61:47" style="height:246px"><char-panel></char-panel></ps-panel>
<ps-panel tabs="Paragraph Styles:92:78|Character Styles:90:75" style="height:166px"><styles-panel></styles-panel></ps-panel>
<ps-panel tabs="Layers:43:29|Channels:57:42|Paths:41:26" style="height:373px;border-bottom-width:1px"><layers-panel></layers-panel></ps-panel></div></div></div>
<task-bar></task-bar>`);

for (const el of labels) {
  const span = el.shadowRoot.querySelector('span');
  const extra = +el.getAttribute('w') - span.getBoundingClientRect().width;
  span.style.letterSpacing = (extra / Math.max(1, el.textContent.length)) + 'px';
}
</script>
</body>
</html>
